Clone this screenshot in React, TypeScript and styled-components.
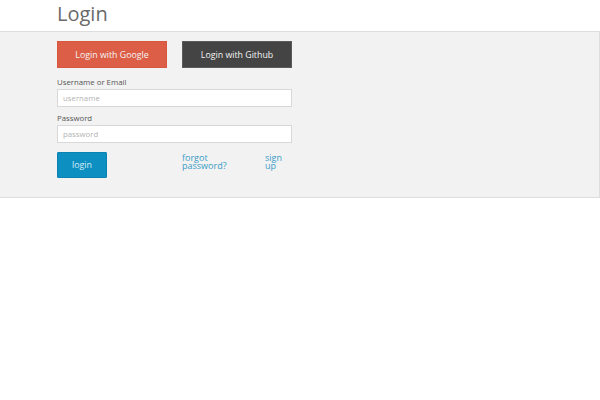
import React from "react";
import styled, { createGlobalStyle } from "styled-components";

const Global = createGlobalStyle`
  html, body { margin: 0; padding: 0; background: #fff; }
  body { font-family: "Open Sans", "DejaVu Sans", sans-serif; }
  * { box-sizing: border-box; }
`;

const Page = styled.div`
  width: 600px;
`;

const Title = styled.h1`
  margin: 0;
  padding: 1px 0 0 57px;
  height: 31px;
  font-size: 20px;
  font-weight: 400;
  color: #6a6a6a;
  line-height: 26px;
`;

const Panel = styled.div`
  background: #f2f2f2;
  border: 1px solid #dedede;
  border-left: none;
  height: 167px;
  padding: 9px 0 0 57px;
`;

const Form = styled.form`
  width: 235px;
  display: flex;
  flex-direction: column;
`;

const ButtonRow = styled.div`
  display: flex;
  gap: 15px;
  margin-bottom: 9px;
`;

const SocialButton = styled.button<{ $bg: string; $border: string }>`
  width: 110px;
  height: 27px;
  background: ${(p) => p.$bg};
  border: 1px solid ${(p) => p.$border};
  color: #f4f4f4;
  font-family: inherit;
  font-size: 8.8px;
  padding: 0;
  cursor: pointer;
`;

const Label = styled.label`
  font-size: 7.8px;
  color: #555;
  line-height: 10px;
  margin-bottom: 2px;
`;

const Input = styled.input`
  width: 235px;
  height: 18px;
  border: 1px solid #d8d8d8;
  background: #fff;
  padding: 0 5px;
  font-family: inherit;
  font-size: 7.8px;
  color: #555;
  margin-bottom: 6px;
  outline: none;
  &::placeholder { color: #b3b3b3; }
`;

const ActionRow = styled.div`
  display: grid;
  grid-template-columns: 125px 83px 30px;
  align-items: start;
  margin-top: 3px;
`;

const LoginButton = styled.button`
  width: 50px;
  height: 26px;
  background: #0e8fc2;
  border: 1px solid #0b82b2;
  border-radius: 1px;
  color: #d8eef7;
  font-family: inherit;
  font-size: 8.8px;
  padding: 0;
`;

const Link = styled.a<{ $w: number }>`
  display: block;
  width: ${(p) => p.$w}px;
  color: #3a9cc6;
  font-size: 9px;
  line-height: 8px;
  text-decoration: none;
  margin-top: 2px;
`;

export default function App() {
  return (
    <Page>
      <Global />
      <Title>Login</Title>
      <Panel>
        <Form onSubmit={(e) => e.preventDefault()}>
          <ButtonRow>
            <SocialButton type="button" $bg="#dd5e46" $border="#d9563f">
              Login with Google
            </SocialButton>
            <SocialButton type="button" $bg="#444444" $border="#5a5a5a">
              Login with Github
            </SocialButton>
          </ButtonRow>
          <Label>Username or Email</Label>
          <Input placeholder="username" />
          <Label>Password</Label>
          <Input type="password" placeholder="password" />
          <ActionRow>
            <LoginButton type="submit">login</LoginButton>
            <Link href="#" $w={50}>forgot password?</Link>
            <Link href="#" $w={22}>sign up</Link>
          </ActionRow>
        </Form>
      </Panel>
    </Page>
  );
}
